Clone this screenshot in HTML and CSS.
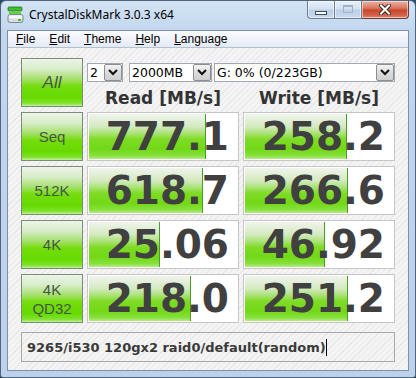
FILE: index.html
```html
<!DOCTYPE html>
<html lang="en">
<head>
    <meta charset="UTF-8">
    <title>CrystalDiskMark 3.0.3 x64</title>
    <link rel="stylesheet" href="styles.css">
</head>
<body>
    <div class="window">
        <div class="titlebar">
            <svg class="app-icon" width="18" height="18" viewBox="0 0 18 18">
                <rect x="1" y="1" width="14" height="4" rx="1" fill="#3fbf2a" stroke="#1f7a18" stroke-width="0.8"/>
                <rect x="2" y="6" width="12" height="2" fill="#5cd43a"/>
                <rect x="1" y="8.5" width="15" height="8" rx="2" fill="#d8dcdf" stroke="#6b7278" stroke-width="0.8"/>
                <rect x="2" y="9.5" width="13" height="3" fill="#f4f6f7"/>
                <rect x="11" y="13" width="3" height="2" fill="#3fbf2a"/>
            </svg>
            <span class="title">CrystalDiskMark 3.0.3 x64</span>
            <div class="caption">
                <span class="cap min"><i></i></span>
                <span class="cap max"><i></i></span>
                <span class="cap close">
                    <svg width="12" height="11" viewBox="0 0 12 11">
                        <path d="M2 1.5 L10 9.5 M10 1.5 L2 9.5" stroke="#3a2a28" stroke-width="4" stroke-linecap="square"/>
                        <path d="M2 1.5 L10 9.5 M10 1.5 L2 9.5" stroke="#ffffff" stroke-width="2" stroke-linecap="square"/>
                    </svg>
                </span>
            </div>
        </div>
        <div class="frame">
            <div class="menubar">
                <span><u>F</u>ile</span>
                <span><u>E</u>dit</span>
                <span><u>T</u>heme</span>
                <span><u>H</u>elp</span>
                <span><u>L</u>anguage</span>
            </div>
            <div class="client">
                <div class="board">
                    <div class="label all">All</div>
                    <div class="top">
                        <div class="selects">
                            <div class="combo c-count"><span>2</span><b class="drop"><svg width="10" height="7" viewBox="0 0 10 7"><path d="M1 1 L5 5 L9 1" fill="none" stroke="#111" stroke-width="2"/></svg></b></div>
                            <div class="combo c-size"><span>2000MB</span><b class="drop"><svg width="10" height="7" viewBox="0 0 10 7"><path d="M1 1 L5 5 L9 1" fill="none" stroke="#111" stroke-width="2"/></svg></b></div>
                            <div class="combo c-drive"><span>G: 0% (0/223GB)</span><b class="drop"><svg width="10" height="7" viewBox="0 0 10 7"><path d="M1 1 L5 5 L9 1" fill="none" stroke="#111" stroke-width="2"/></svg></b></div>
                        </div>
                        <div class="heads">
                            <span>Read [MB/s]</span>
                            <span>Write [MB/s]</span>
                        </div>
                    </div>

                    <div class="label">Seq</div>
                    <div class="value"><div class="bar" style="width: 77%"></div><span>777.1</span></div>
                    <div class="value"><div class="bar" style="width: 67.6%"></div><span>258.2</span></div>

                    <div class="label">512K</div>
                    <div class="value"><div class="bar" style="width: 75%"></div><span>618.7</span></div>
                    <div class="value"><div class="bar" style="width: 68.2%"></div><span>266.6</span></div>

                    <div class="label">4K</div>
                    <div class="value"><div class="bar" style="width: 46.6%"></div><span>25.06</span></div>
                    <div class="value"><div class="bar" style="width: 52.7%"></div><span>46.92</span></div>

                    <div class="label two">4K<br>QD32</div>
                    <div class="value"><div class="bar" style="width: 67%"></div><span>218.0</span></div>
                    <div class="value"><div class="bar" style="width: 68.2%"></div><span>251.2</span></div>
                </div>
                <div class="comment">9265/i530 120gx2 raid0/default(random)<span class="caret"></span></div>
            </div>
        </div>
    </div>
</body>
</html>
```

FILE: styles.css
```css
body {
    margin: 0;
    padding: 0;
    background: #2b4a68;
    font-family: "Liberation Sans", Arial, sans-serif;
}

.window {
    width: 414px;
    height: 376px;
    border: 1px solid #50657e;
    border-radius: 6px 6px 3px 3px;
    background: linear-gradient(180deg, #d3e3f4 0px, #c2d7ee 30px, #bcd2ea 100%);
    display: flex;
    flex-direction: column;
}

.titlebar {
    height: 29px;
    display: flex;
    align-items: flex-start;
}
.app-icon {
    margin: 5px 0 0 6px;
}
.title {
    margin: 6px 0 0 4px;
    font-family: "Noto Sans", sans-serif;
    font-size: 12px;
    color: #000;
    line-height: 16px;
}

.caption {
    margin-left: auto;
    margin-right: 6px;
    display: flex;
}
.cap {
    height: 18px;
    box-sizing: border-box;
    border: 1px solid #6f819a;
    border-top: none;
    display: flex;
    align-items: center;
    justify-content: center;
    background: linear-gradient(180deg, #eaf1fa 0%, #d3e1f1 45%, #bccfe6 55%, #cadaee 100%);
    box-shadow: inset 0 0 0 1px rgba(255, 255, 255, 0.5);
}
.min {
    width: 28px;
    border-radius: 0 0 0 4px;
}
.max {
    width: 27px;
    border-left: none;
}
.close {
    width: 47px;
    border-left: none;
    border-color: #6b3b33;
    border-radius: 0 0 4px 0;
    background: linear-gradient(180deg, #eab2a2 0%, #d97b62 40%, #c8462c 55%, #d4644a 85%, #e08a70 100%);
}
.min i {
    display: block;
    width: 10px;
    height: 2px;
    margin-top: 6px;
    background: #fff;
    border: 1px solid #3b4a5c;
}
.max i {
    display: block;
    width: 8px;
    height: 5px;
    border: 1px solid #9fb2c8;
    border-top-width: 2px;
    margin-bottom: 2px;
}

.frame {
    flex: 1;
    margin: 0 6px 6px 6px;
    border: 1px solid #7f91a8;
    display: flex;
    flex-direction: column;
}

.menubar {
    height: 16px;
    border-bottom: 1px solid #b4bfd0;
    background: linear-gradient(180deg, #fbfcfe, #e4eaf5);
    display: flex;
    align-items: center;
    padding-left: 1px;
    font-size: 12px;
    color: #000;
}
.menubar span {
    padding: 0 7px;
}

.client {
    flex: 1;
    padding: 10px 13px 0 13px;
    background: repeating-linear-gradient(135deg, #f4f4f4 0px, #f4f4f4 3px, #e8e8e8 3px, #e8e8e8 4px);
}

.board {
    display: grid;
    grid-template-columns: 62px 152px 152px;
    grid-template-rows: repeat(5, 49px);
    column-gap: 4px;
    row-gap: 5px;
}

.label {
    box-sizing: border-box;
    border: 1px solid #7d8c78;
    background: linear-gradient(180deg, #eef4ea 0%, #d6ecc6 22%, #a8e070 42%, #74dc0c 58%, #66da00 82%, #7ee22c 94%, #c4f09c 100%);
    display: flex;
    align-items: center;
    justify-content: center;
    text-align: center;
    font-size: 15px;
    color: #475647;
}
.label.all {
    font-size: 17px;
    font-style: italic;
}
.label.two {
    line-height: 19px;
    padding-top: 1px;
}

.top {
    grid-column: 2 / 4;
    display: flex;
    flex-direction: column;
}
.selects {
    margin-top: 5px;
    display: flex;
    height: 19px;
}
.combo {
    box-sizing: border-box;
    height: 19px;
    border: 1px solid #a3a9b2;
    background: #fff;
    display: flex;
    align-items: center;
    font-family: "DejaVu Sans", sans-serif;
    font-size: 12.5px;
    color: #000;
}
.combo span {
    flex: 1;
    padding-left: 2px;
}
.c-count {
    width: 36px;
}
.c-size {
    width: 83px;
    margin-left: 6px;
}
.c-drive {
    width: 181px;
    margin-left: 2px;
}
.drop {
    width: 18px;
    height: 17px;
    box-sizing: border-box;
    border: 1px solid #8b8f95;
    border-radius: 2px;
    background: linear-gradient(180deg, #f4f4f4, #dcdcdc 50%, #cfcfcf);
    display: flex;
    align-items: center;
    justify-content: center;
}

.heads {
    flex: 1;
    display: flex;
    gap: 4px;
    padding-top: 6px;
}
.heads span {
    width: 152px;
    text-align: center;
    font-family: "DejaVu Sans", sans-serif;
    font-weight: bold;
    font-size: 17px;
    color: #333;
}

.value {
    position: relative;
    box-sizing: border-box;
    border: 1px solid #c6c6c6;
    background: #fff;
    display: flex;
    align-items: center;
    justify-content: flex-end;
    padding-right: 9px;
}
.bar {
    position: absolute;
    left: 1px;
    top: 1px;
    bottom: 1px;
    border-right: 1px solid #4c9a2c;
    background: linear-gradient(180deg, #f0f4ec 0%, #d4eac0 28%, #a6e270 44%, #7edc24 56%, #72d816 78%, #86e03c 92%, #b2ec80 100%);
}
.value span {
    position: relative;
    font-family: "DejaVu Sans", sans-serif;
    font-weight: bold;
    font-size: 39px;
    line-height: 1;
    color: #404040;
}

.comment {
    margin-top: 9px;
    height: 30px;
    box-sizing: border-box;
    border: 1px solid #a9a9a9;
    display: flex;
    align-items: center;
    padding-left: 5px;
    font-family: "DejaVu Sans", sans-serif;
    font-weight: bold;
    font-size: 13px;
    color: #3a3a3a;
}
.caret {
    display: inline-block;
    width: 1px;
    height: 17px;
    background: #000;
}
```
